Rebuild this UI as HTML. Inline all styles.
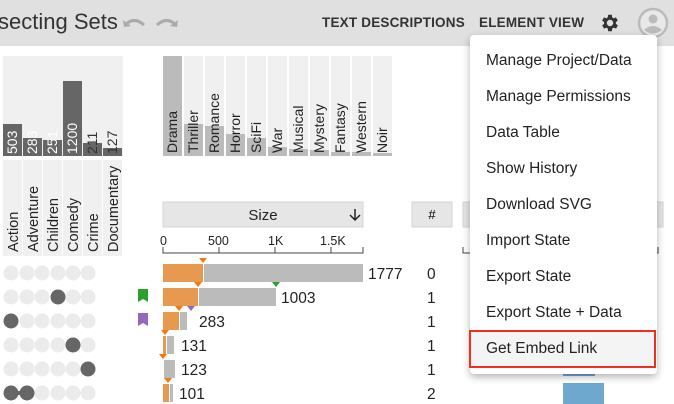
<!DOCTYPE html>
<html><head><meta charset="utf-8"><style>
body{margin:0;width:674px;height:404px;overflow:hidden;background:#fff;font-family:"Liberation Sans",sans-serif;position:relative}
.hdr{position:absolute;left:0;top:0;width:674px;height:46px;background:#e0e0e0}
.menu{position:absolute;left:470px;top:35px;width:187px;height:339px;background:#fff;border-radius:4px;box-shadow:0 3px 8px rgba(0,0,0,.3)}
.mi{position:absolute;left:16px;font-size:15.5px;color:#222}
.hl{position:absolute;left:-1px;top:295px;width:183px;height:34px;border:2px solid #f0301a;background:#f4f4f4}
</style></head><body>
<div class="hdr">
<div style="position:absolute;left:-2px;top:9px;font-size:22px;color:#333">secting Sets</div>
<svg style="position:absolute;left:120px;top:12px" width="70" height="22"><path d="M5 13 Q14 4 24 13" stroke="#aaa" stroke-width="3" fill="none"/><path d="M3 8 L4 15 L11 14Z" fill="#aaa"/><path d="M66 13 Q57 4 47 13" stroke="#aaa" stroke-width="3" fill="none" transform="translate(-10 0)"/><path d="M58 8 L57 15 L50 14Z" fill="#aaa"/></svg>
<div style="position:absolute;left:322px;top:15px;font-size:13.5px;font-weight:bold;color:#333;letter-spacing:.2px">TEXT DESCRIPTIONS</div>
<div style="position:absolute;left:479px;top:15px;font-size:13.5px;font-weight:bold;color:#333;letter-spacing:.2px">ELEMENT VIEW</div>
<svg style="position:absolute;left:599px;top:12px" width="22" height="22" viewBox="0 0 24 24"><path fill="#333" d="M19.4 13a7.5 7.5 0 000-2l2.1-1.6-2-3.5-2.5 1a7 7 0 00-1.7-1L15 3h-4l-.4 2.9a7 7 0 00-1.7 1l-2.5-1-2 3.5L6.6 11a7.5 7.5 0 000 2l-2.1 1.6 2 3.5 2.5-1a7 7 0 001.7 1L11 21h4l.4-2.9a7 7 0 001.7-1l2.5 1 2-3.5zM13 15.5a3.5 3.5 0 110-7 3.5 3.5 0 010 7z" transform="translate(-1 0)"/></svg>
<svg style="position:absolute;left:637px;top:7px" width="32" height="32"><circle cx="16" cy="16" r="14" fill="#e8e8e8" stroke="#bbb" stroke-width="2.5"/><circle cx="16" cy="12" r="4.5" fill="#bbb"/><path d="M7 23 Q16 15 25 23 Q16 30 7 23Z" fill="#bbb"/></svg>
</div>
<svg style="position:absolute;left:0;top:46px" width="674" height="358" font-family="Liberation Sans" font-size="13">
<rect x="3" y="10" width="120" height="100" fill="#f0f0f0"/>
<g fill="#666"><rect x="3" y="78" width="19" height="32"/><rect x="23" y="92" width="19" height="18"/><rect x="43" y="94" width="19" height="16"/><rect x="63" y="35" width="19" height="75"/><rect x="83" y="97" width="19" height="13"/><rect x="103" y="102" width="19" height="8"/></g>
<g fill="#fff" font-size="14"><text transform="translate(17,108) rotate(-90)">503</text><text transform="translate(37,108) rotate(-90)">283</text><text transform="translate(57,108) rotate(-90)">251</text><text transform="translate(77,108) rotate(-90)">1200</text><text transform="translate(97,108) rotate(-90)" fill="#333">211</text><text transform="translate(117,108) rotate(-90)" fill="#333">127</text></g>
<g fill="#f0f0f0"><rect x="3" y="114" width="19" height="96"/><rect x="23" y="114" width="19" height="96"/><rect x="43" y="114" width="19" height="96"/><rect x="63" y="114" width="19" height="96"/><rect x="83" y="114" width="19" height="96"/><rect x="103" y="114" width="19" height="96"/></g>
<g fill="#222" font-size="14.5"><text transform="translate(18,206) rotate(-90)">Action</text><text transform="translate(38,206) rotate(-90)">Adventure</text><text transform="translate(58,206) rotate(-90)">Children</text><text transform="translate(78,206) rotate(-90)">Comedy</text><text transform="translate(98,206) rotate(-90)">Crime</text><text transform="translate(118,206) rotate(-90)">Documentary</text></g>
<g fill="#f0f0f0"><rect x="163" y="10" width="19" height="100"/><rect x="184" y="10" width="19" height="100"/><rect x="205" y="10" width="19" height="100"/><rect x="226" y="10" width="19" height="100"/><rect x="247" y="10" width="19" height="100"/><rect x="268" y="10" width="19" height="100"/><rect x="289" y="10" width="19" height="100"/><rect x="310" y="10" width="19" height="100"/><rect x="331" y="10" width="19" height="100"/><rect x="352" y="10" width="19" height="100"/><rect x="373" y="10" width="19" height="100"/></g>
<g fill="#bbb"><rect x="163" y="10" width="19" height="100"/><rect x="184" y="78" width="19" height="32"/><rect x="205" y="80" width="19" height="30"/><rect x="226" y="88" width="19" height="22"/><rect x="247" y="92" width="19" height="18"/><rect x="268" y="101" width="19" height="9"/><rect x="289" y="103" width="19" height="7"/><rect x="310" y="104" width="19" height="6"/><rect x="331" y="106" width="19" height="4"/><rect x="352" y="106" width="19" height="4"/><rect x="373" y="107" width="19" height="3"/></g>
<g fill="#222" font-size="14"><text transform="translate(177,107) rotate(-90)">Drama</text><text transform="translate(198,107) rotate(-90)">Thriller</text><text transform="translate(219,107) rotate(-90)">Romance</text><text transform="translate(240,107) rotate(-90)">Horror</text><text transform="translate(261,107) rotate(-90)">SciFi</text><text transform="translate(282,107) rotate(-90)">War</text><text transform="translate(303,107) rotate(-90)">Musical</text><text transform="translate(324,107) rotate(-90)">Mystery</text><text transform="translate(345,107) rotate(-90)">Fantasy</text><text transform="translate(366,107) rotate(-90)">Western</text><text transform="translate(387,107) rotate(-90)">Noir</text></g>
<rect x="163" y="156" width="200" height="25" fill="#e6e6e6" stroke="#d4d4d4"/>
<text x="263" y="174" text-anchor="middle" font-size="15" fill="#222">Size</text>
<path d="M355 163v11M350 169l5 5 5-5" stroke="#222" stroke-width="1.5" fill="none"/>
<g font-size="12.5" fill="#222"><text x="160" y="199">0</text><text x="208" y="199">500</text><text x="268" y="199">1K</text><text x="320" y="199">1.5K</text></g>
<path d="M163 201v6h200v-6M219 201v6M275 201v6M331 201v6" stroke="#444" fill="none"/>
<rect x="412" y="156" width="40" height="25" fill="#e6e6e6" stroke="#d4d4d4"/><text x="432" y="173" text-anchor="middle" font-size="13">#</text>
<rect x="463" y="156" width="200" height="25" fill="#e6e6e6" stroke="#d4d4d4"/>
<path d="M463 201v6h195v-6" stroke="#444" fill="none"/>
<g>
<g fill="#ebebeb">
<circle cx="11" cy="227" r="7.5"/><circle cx="27" cy="227" r="7.5"/><circle cx="42" cy="227" r="7.5"/><circle cx="58" cy="227" r="7.5"/><circle cx="73" cy="227" r="7.5"/><circle cx="88" cy="227" r="7.5"/>
<circle cx="11" cy="251" r="7.5"/><circle cx="27" cy="251" r="7.5"/><circle cx="42" cy="251" r="7.5"/><circle cx="73" cy="251" r="7.5"/><circle cx="88" cy="251" r="7.5"/>
<circle cx="27" cy="275" r="7.5"/><circle cx="42" cy="275" r="7.5"/><circle cx="58" cy="275" r="7.5"/><circle cx="73" cy="275" r="7.5"/><circle cx="88" cy="275" r="7.5"/>
<circle cx="11" cy="299" r="7.5"/><circle cx="27" cy="299" r="7.5"/><circle cx="42" cy="299" r="7.5"/><circle cx="58" cy="299" r="7.5"/><circle cx="88" cy="299" r="7.5"/>
<circle cx="11" cy="323" r="7.5"/><circle cx="27" cy="323" r="7.5"/><circle cx="42" cy="323" r="7.5"/><circle cx="58" cy="323" r="7.5"/><circle cx="73" cy="323" r="7.5"/>
<circle cx="42" cy="347" r="7.5"/><circle cx="58" cy="347" r="7.5"/><circle cx="73" cy="347" r="7.5"/><circle cx="88" cy="347" r="7.5"/>
</g>
<g fill="#666"><circle cx="58" cy="251" r="7.5"/><circle cx="11" cy="275" r="7.5"/><circle cx="73" cy="299" r="7.5"/><circle cx="88" cy="323" r="7.5"/><circle cx="11" cy="347" r="7.5"/><circle cx="27" cy="347" r="7.5"/><rect x="11" y="345" width="16" height="4"/></g>
<path d="M138 243h10v13l-5-3-5 3z" fill="#2ca02c"/><path d="M138 267h10v13l-5-3-5 3z" fill="#9467bd"/>
<g fill="#bbb"><rect x="204" y="218" width="159" height="18"/><rect x="199" y="242" width="77" height="18"/><rect x="180" y="266" width="7" height="18"/><rect x="167" y="290" width="7" height="18"/><rect x="164" y="314" width="11" height="18"/><rect x="170" y="338" width="3" height="18"/></g>
<g fill="#e6994f"><rect x="163" y="218" width="40" height="18"/><rect x="163" y="242" width="35" height="18"/><rect x="163" y="266" width="16" height="18"/><rect x="163" y="290" width="3" height="18"/><rect x="163" y="338" width="6" height="18"/></g>
<g fill="#f07a10"><path d="M199 212h8l-4 5z"/><path d="M194 236h8l-4 5z"/><path d="M175 260h8l-4 5z"/><path d="M161 284h8l-4 5z"/><path d="M159 308h8l-4 5z"/><path d="M164 332h8l-4 5z"/></g>
<path d="M272 236h8l-4 5z" fill="#2ca02c"/><path d="M187 260h8l-4 5z" fill="#9467bd"/>
<g font-size="15.5" fill="#222"><text x="368" y="233">1777</text><text x="281" y="257">1003</text><text x="199" y="281">283</text><text x="181" y="305">131</text><text x="181" y="329">123</text><text x="179" y="353">101</text></g>
<g font-size="15.5" fill="#222"><text x="427" y="233">0</text><text x="427" y="257">1</text><text x="427" y="281">1</text><text x="427" y="305">1</text><text x="427" y="329">1</text><text x="427" y="353">2</text></g>
<rect x="563" y="320" width="32" height="10" fill="#6fa8cf"/><rect x="563" y="337" width="41" height="21" fill="#6fa8cf"/>
</g>
</svg>
<div class="menu">
<div class="hl"></div>
<div class="mi" style="top:17px">Manage Project/Data</div>
<div class="mi" style="top:53px">Manage Permissions</div>
<div class="mi" style="top:89px">Data Table</div>
<div class="mi" style="top:125px">Show History</div>
<div class="mi" style="top:161px">Download SVG</div>
<div class="mi" style="top:197px">Import State</div>
<div class="mi" style="top:233px">Export State</div>
<div class="mi" style="top:269px">Export State + Data</div>
<div class="mi" style="top:305px">Get Embed Link</div>
</div>
</body></html>
